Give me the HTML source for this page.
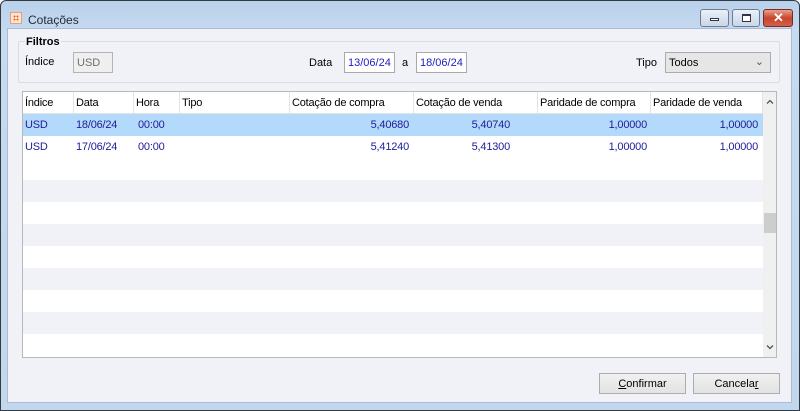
<!DOCTYPE html>
<html><head><meta charset="utf-8"><style>
*{box-sizing:border-box;margin:0;padding:0}
body{width:800px;height:411px;overflow:hidden;font-family:"Liberation Sans",sans-serif;font-size:11px;color:#000;background:#fff}
.win{position:absolute;left:0;top:0;width:800px;height:411px;border:1px solid #333a44;border-radius:6px 6px 0 0;background:linear-gradient(#b9d1ea,#c6daf0 30px,#c1d7ee);}
.client{position:absolute;left:7px;top:28px;width:785px;height:375px;background:#f1f2f7;border:1px solid #a9bcd4}
.abs{position:absolute}
.tb{position:absolute;top:8px;height:18px;border:1px solid #6d7c91;border-radius:3px;background:linear-gradient(#e9f0f8,#c9d7e8)}
.inp{position:absolute;height:21px;border:1px solid #a9a9a9;background:#fff;color:#2020c0;padding:4px 3px;font-size:11px}
.grid{position:absolute;left:22px;top:91px;width:755px;height:267px;border:1px solid #b8b8b8;background:#fff;overflow:hidden}
.row{position:absolute;left:0;width:740px;height:22px}
.c{position:absolute;top:5px;white-space:nowrap;letter-spacing:-0.2px}
.h{position:absolute;top:0;height:22px;border-right:1px solid #e4e4e4;border-bottom:1px solid #e4e4e4;padding:5px 2px;white-space:nowrap;letter-spacing:-0.2px}
.btn{position:absolute;top:373px;width:87px;height:21px;border:1px solid #adadad;background:linear-gradient(#f0f0f0,#e3e3e3);text-align:center;padding-top:4px}
</style></head><body>
<div class="win">
<div class="abs" style="left:9px;top:11px;width:12px;height:12px;background:#fbe3d2;border:1px solid #e8a070"><div style="margin:2px;width:6px;height:6px;background:radial-gradient(#e5632a 40%,transparent 45%) 0 0/3px 3px"></div></div>
<div class="abs" style="left:27px;top:12px;font-size:12px;color:#1e2a3a">Cotações</div>
<div class="tb" style="left:699px;width:29px"><div style="position:absolute;left:9px;top:8px;width:9px;height:3px;border:1px solid #334;background:#fff"></div></div>
<div class="tb" style="left:731px;width:28px"><div style="position:absolute;left:9px;top:4px;width:9px;height:8px;border:1px solid #334;border-top-width:2px;background:#fff"></div></div>
<div class="tb" style="left:762px;width:30px;border-color:#7a2a20;background:linear-gradient(#e8a08e,#c8452e 50%,#d0604a)"><div style="position:absolute;left:9px;top:0px;color:#fff;font-weight:bold;font-size:13px">✕</div></div>
</div>
<div class="client"></div>
<div class="abs" style="left:18px;top:41px;width:762px;height:42px;border:1px solid #dcdcdc;border-radius:2px"></div>
<div class="abs" style="left:25px;top:36px;font-weight:bold;background:#f1f2f7;padding:0 1px">Filtros</div>
<div class="abs" style="left:25px;top:56px">Índice</div>
<div class="inp" style="left:73px;top:52px;width:40px;background:#efefef;color:#6d6d6d;border-color:#b4b4b4">USD</div>
<div class="abs" style="left:309px;top:57px">Data</div>
<div class="inp" style="left:344px;top:52px;width:51px">13/06/24</div>
<div class="abs" style="left:402px;top:57px">a</div>
<div class="inp" style="left:416px;top:52px;width:51px">18/06/24</div>
<div class="abs" style="left:636px;top:57px">Tipo</div>
<div class="inp" style="left:665px;top:52px;width:106px;background:#e6e6e6;color:#000;border-color:#acacac">Todos<span style="position:absolute;right:6px;top:2px;color:#555">⌄</span></div>
<div class="grid">
<div class="h" style="left:0;width:51px">Índice</div><div class="h" style="left:51px;width:60px">Data</div><div class="h" style="left:111px;width:46px">Hora</div><div class="h" style="left:157px;width:110px">Tipo</div><div class="h" style="left:267px;width:124px">Cotação de compra</div><div class="h" style="left:391px;width:124px">Cotação de venda</div><div class="h" style="left:515px;width:113px">Paridade de compra</div><div class="h" style="left:628px;width:112px">Paridade de venda</div>
<div class="row" style="top:22px;background:#b3d9fb;color:#20209a">
<div class="c" style="left:2px">USD</div><div class="c" style="left:53px">18/06/24</div><div class="c" style="left:115px">00:00</div><div class="c" style="left:0;width:386px;text-align:right">5,40680</div><div class="c" style="left:0;width:487px;text-align:right">5,40740</div><div class="c" style="left:0;width:624px;text-align:right">1,00000</div><div class="c" style="left:0;width:735px;text-align:right">1,00000</div>
</div>
<div class="row" style="top:44px;color:#20209a">
<div class="c" style="left:2px">USD</div><div class="c" style="left:53px">17/06/24</div><div class="c" style="left:115px">00:00</div><div class="c" style="left:0;width:386px;text-align:right">5,41240</div><div class="c" style="left:0;width:487px;text-align:right">5,41300</div><div class="c" style="left:0;width:624px;text-align:right">1,00000</div><div class="c" style="left:0;width:735px;text-align:right">1,00000</div>
</div>
<div class="row" style="top:88px;background:#f0f2f8"></div>
<div class="row" style="top:132px;background:#f0f2f8"></div>
<div class="row" style="top:176px;background:#f0f2f8"></div>
<div class="row" style="top:220px;background:#f0f2f8"></div>
<div class="abs" style="left:740px;top:0;width:14px;height:265px;background:#f0f0f0"></div>
<div class="abs" style="left:741px;top:121px;width:12px;height:20px;background:#cdcdcd"></div>
<svg class="abs" style="left:743px;top:7px" width="8" height="6"><path d="M1 4.5L4 1.5L7 4.5" stroke="#555" stroke-width="1.3" fill="none"/></svg>
<svg class="abs" style="left:743px;top:252px" width="8" height="6"><path d="M1 1.5L4 4.5L7 1.5" stroke="#555" stroke-width="1.3" fill="none"/></svg>
</div>
<div class="btn" style="left:599px"><u>C</u>onfirmar</div>
<div class="btn" style="left:693px">Cancela<u>r</u></div>
</body></html>
